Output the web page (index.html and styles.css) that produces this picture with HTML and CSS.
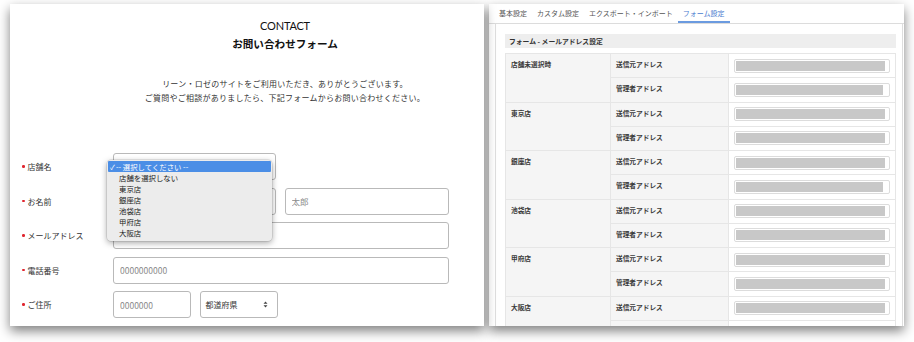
FILE: index.html
```html
<!DOCTYPE html>
<html lang="ja">
<head>
  <meta charset="UTF-8">
  <title>お問い合わせフォーム設定</title>
  <link rel="stylesheet" href="styles.css">
</head>
<body>
  <div class="screen">

    <div class="shot shot-form">
      <div class="intro">
        <p class="eyebrow">CONTACT</p>
        <h1 class="title">お問い合わせフォーム</h1>
        <p class="lead">リーン・ロゼのサイトをご利用いただき、ありがとうございます。<br>ご質問やご相談がありましたら、下記フォームからお問い合わせください。</p>
      </div>

      <div class="form">
        <div class="row">
          <div class="label"><span class="req"></span>店舗名</div>
          <div class="fields">
            <div class="field select w-half"></div>
            <ul class="dropdown">
              <li class="selected"><span class="check">✓</span>-- 選択してください --</li>
              <li>店舗を選択しない</li>
              <li>東京店</li>
              <li>銀座店</li>
              <li>池袋店</li>
              <li>甲府店</li>
              <li>大阪店</li>
            </ul>
          </div>
        </div>

        <div class="row">
          <div class="label"><span class="req"></span>お名前</div>
          <div class="fields">
            <input class="field w-half" type="text" placeholder="山田">
            <input class="field w-half2" type="text" placeholder="太郎">
          </div>
        </div>

        <div class="row">
          <div class="label"><span class="req"></span>メールアドレス</div>
          <div class="fields">
            <input class="field w-full" type="text">
          </div>
        </div>

        <div class="row">
          <div class="label"><span class="req"></span>電話番号</div>
          <div class="fields">
            <input class="field w-full" type="text" placeholder="0000000000">
          </div>
        </div>

        <div class="row">
          <div class="label"><span class="req"></span>ご住所</div>
          <div class="fields">
            <input class="field w-small" type="text" placeholder="0000000">
            <div class="field select w-small pref">
              <span>都道府県</span>
              <svg class="updown" width="5" height="7" viewBox="0 0 5 7"><path d="M0.5 2.8 L2.5 0.6 L4.5 2.8 Z M0.5 4.2 L2.5 6.4 L4.5 4.2 Z" fill="#444"/></svg>
            </div>
          </div>
        </div>
      </div>
    </div>

    <div class="shot shot-admin">
      <div class="tabs">
        <div class="tab">基本設定</div>
        <div class="tab">カスタム設定</div>
        <div class="tab">エクスポート・インポート</div>
        <div class="tab active">フォーム設定</div>
      </div>

      <div class="panel">
        <div class="panel-head">フォーム - メールアドレス設定</div>
        <table class="mail-table">
          <tr>
            <th class="shop" rowspan="2">店舗未選択時</th>
            <th>送信元アドレス</th>
            <td><div class="mail"><div class="mail-fill"></div></div></td>
          </tr>
          <tr>
            <th>管理者アドレス</th>
            <td><div class="mail"><div class="mail-fill short"></div></div></td>
          </tr>
          <tr>
            <th class="shop" rowspan="2">東京店</th>
            <th>送信元アドレス</th>
            <td><div class="mail"><div class="mail-fill"></div></div></td>
          </tr>
          <tr>
            <th>管理者アドレス</th>
            <td><div class="mail"><div class="mail-fill"></div></div></td>
          </tr>
          <tr>
            <th class="shop" rowspan="2">銀座店</th>
            <th>送信元アドレス</th>
            <td><div class="mail"><div class="mail-fill"></div></div></td>
          </tr>
          <tr>
            <th>管理者アドレス</th>
            <td><div class="mail"><div class="mail-fill short"></div></div></td>
          </tr>
          <tr>
            <th class="shop" rowspan="2">池袋店</th>
            <th>送信元アドレス</th>
            <td><div class="mail"><div class="mail-fill"></div></div></td>
          </tr>
          <tr>
            <th>管理者アドレス</th>
            <td><div class="mail"><div class="mail-fill"></div></div></td>
          </tr>
          <tr>
            <th class="shop" rowspan="2">甲府店</th>
            <th>送信元アドレス</th>
            <td><div class="mail"><div class="mail-fill"></div></div></td>
          </tr>
          <tr>
            <th>管理者アドレス</th>
            <td><div class="mail"><div class="mail-fill"></div></div></td>
          </tr>
          <tr>
            <th class="shop" rowspan="2">大阪店</th>
            <th>送信元アドレス</th>
            <td><div class="mail"><div class="mail-fill"></div></div></td>
          </tr>
          <tr>
            <th></th>
            <td></td>
          </tr>
        </table>
      </div>
    </div>

  </div>
</body>
</html>
```

FILE: styles.css
```css
* {
  box-sizing: border-box;
}

html, body {
  margin: 0;
  background: #fff;
}

body {
  width: 914px;
  height: 342px;
  overflow: hidden;
  font-family: "Noto Sans CJK JP", "Noto Sans", sans-serif;
  color: #222;
}

.screen {
  display: flex;
  gap: 5px;
  padding: 4px 10px 0 10px;
}

.shot {
  height: 322px;
  background: #fff;
  overflow: hidden;
  box-shadow: 0 5px 11px rgba(0, 0, 0, 0.5);
}

/* ---------- left: contact form ---------- */

.shot-form {
  width: 474px;
  position: relative;
}

.intro {
  width: 550px;
  text-align: center;
  padding-top: 15px;
}

.eyebrow {
  margin: 0;
  font-family: "Lato", "Liberation Sans", sans-serif;
  font-size: 11px;
  line-height: 14px;
  letter-spacing: -0.2px;
  color: #111;
}

.title {
  margin: 3px 0 0;
  font-size: 10.6px;
  line-height: 16px;
  font-weight: 700;
  color: #111;
}

.lead {
  margin: 25px 0 0;
  font-size: 8px;
  line-height: 14px;
  letter-spacing: 0.25px;
  color: #333;
}

.form {
  margin-top: 48px;
  padding-left: 12px;
  display: flex;
  flex-direction: column;
  gap: 7.5px;
}

.row {
  display: flex;
  align-items: center;
  height: 27px;
}

.label {
  width: 91px;
  font-size: 8px;
  color: #333;
  display: flex;
  align-items: center;
}

.req {
  width: 2.5px;
  height: 2.5px;
  border-radius: 50%;
  background: #e0262f;
  margin-right: 3px;
}

.fields {
  position: relative;
  display: flex;
  gap: 8.5px;
  height: 27px;
}

.field {
  height: 27px;
  border: 1px solid #b9b9b9;
  border-radius: 3px;
  background: #fff;
  padding: 0 6px;
  font-family: "Noto Sans CJK JP", "Liberation Sans", sans-serif;
  font-size: 8.5px;
  color: #333;
  outline: none;
}

.field::placeholder {
  color: #8a8a8a;
}

.w-half { width: 163px; }
.w-half2 { width: 164px; }
.w-full { width: 336px; }
.w-small { width: 78px; }

.select {
  display: flex;
  align-items: center;
  justify-content: space-between;
}

.pref {
  padding: 0 9px 0 5px;
  font-size: 8px;
}

.updown {
  display: block;
}

.dropdown {
  position: absolute;
  left: -6px;
  top: 7px;
  width: 165px;
  margin: 0;
  padding: 1px 1px 3px;
  list-style: none;
  background: #ececec;
  border-radius: 4px;
  box-shadow: 0 2px 6px rgba(0, 0, 0, 0.35), 0 0 0 0.5px rgba(0, 0, 0, 0.15);
  z-index: 2;
}

.dropdown li {
  height: 11px;
  line-height: 11px;
  padding-left: 11px;
  font-size: 7.4px;
  color: #222;
  white-space: nowrap;
}

.dropdown li.selected {
  background: #4b8ee6;
  color: #fff;
  padding-left: 2px;
  border-radius: 1px;
}

.check {
  display: inline-block;
  width: 5px;
  margin-right: 1px;
  font-size: 7px;
}

/* ---------- right: admin settings ---------- */

.shot-admin {
  width: 415px;
}

.tabs {
  display: flex;
  height: 20px;
  padding-left: 5px;
  border-bottom: 1px solid #dcdcdc;
}

.tab {
  padding: 0 5px;
  font-size: 7px;
  line-height: 19px;
  color: #555;
  white-space: nowrap;
}

.tab.active {
  color: #4a7bcf;
  border-bottom: 2px solid #6b9be0;
}

.panel {
  margin: 0 1px 0 6px;
  height: 400px;
  border: 1px solid #dedede;
  border-top: none;
  padding: 10px 6px 0 9px;
}

.panel-head {
  height: 14px;
  line-height: 14px;
  padding-left: 4px;
  background: #eeeeee;
  font-size: 6.8px;
  font-weight: 700;
  color: #333;
}

.mail-table {
  margin-top: 5px;
  width: 391px;
  border-collapse: collapse;
  table-layout: fixed;
}

.mail-table tr {
  height: 24.27px;
}

.mail-table th {
  background: #f5f5f5;
  border: 1px solid #e6e6e6;
  font-size: 6.7px;
  font-weight: 700;
  color: #3a3a3a;
  text-align: left;
  vertical-align: top;
  padding: 5px 0 0 5px;
  line-height: 10px;
  white-space: nowrap;
}

.mail-table th.shop {
  width: 105px;
}

.mail-table th:not(.shop) {
  width: 118px;
}

.mail-table td {
  border: 1px solid #e6e6e6;
  padding: 0 5px;
  vertical-align: middle;
}

.mail {
  width: 156px;
  height: 14px;
  border: 1px solid #dcdcdc;
  border-radius: 2px;
  background: #fff;
  padding: 1px 0 1px 1px;
}

.mail-fill {
  width: 149px;
  height: 100%;
  background: #c8c8c8;
}

.mail-fill.short {
  width: 147px;
}
```
